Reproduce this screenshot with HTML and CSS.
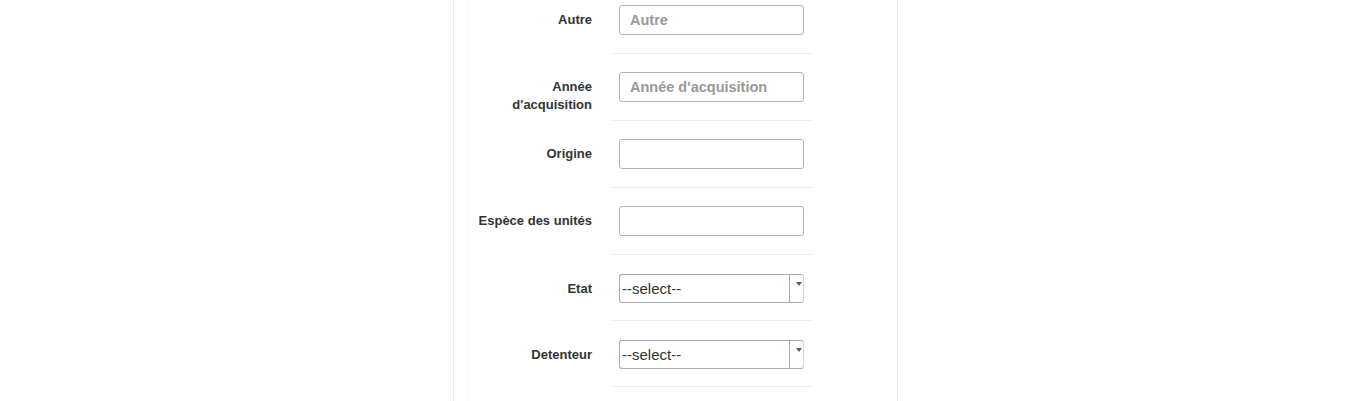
FILE: index.html
```html
<!DOCTYPE html>
<html lang="fr">
<head>
<meta charset="utf-8">
<title>Formulaire</title>
<link rel="stylesheet" href="styles.css">
</head>
<body>
<div class="panel">
  <div class="inner">
    <div class="row">
      <label class="label">Autre</label>
      <div class="field"><input class="input" type="text" placeholder="Autre"></div>
    </div>
    <div class="row">
      <label class="label">Année<br>d'acquisition</label>
      <div class="field"><input class="input" type="text" placeholder="Année d'acquisition"></div>
    </div>
    <div class="row">
      <label class="label">Origine</label>
      <div class="field"><input class="input" type="text"></div>
    </div>
    <div class="row">
      <label class="label">Espèce des unités</label>
      <div class="field"><input class="input" type="text"></div>
    </div>
    <div class="row row-select">
      <label class="label">Etat</label>
      <div class="field">
        <div class="select"><span class="sel-text">--select--</span><span class="sel-arrow"><span class="tri"></span></span></div>
      </div>
    </div>
    <div class="row row-select">
      <label class="label">Detenteur</label>
      <div class="field">
        <div class="select"><span class="sel-text">--select--</span><span class="sel-arrow"><span class="tri"></span></span></div>
      </div>
    </div>
  </div>
</div>
</body>
</html>
```
FILE: styles.css
```css
html, body {
  margin: 0;
  padding: 0;
  background: #fff;
  font-family: "Liberation Sans", Arial, sans-serif;
  color: #333;
}
.panel {
  width: 443px;
  margin: -13px auto 0;
  border-left: 1px solid #ececec;
  border-right: 1px solid #ececec;
  height: 430px;
  position: relative;
  left: 1px;
}
.inner {
  margin-left: 14px;
  height: 100%;
  border-left: 1px solid #fafafa;
}
.row {
  display: flex;
}
.label {
  width: 123px;
  padding-right: 18px;
  padding-top: 24px;
  text-align: right;
  font-size: 13px;
  font-weight: bold;
  line-height: 18px;
  color: #333;
}
.field {
  width: 203px;
  padding: 18px 0 18px;
  border-bottom: 1px solid #eee;
}
.row-select .label {
  padding-top: 25px;
}
.row-select .field {
  padding: 19px 0 17px;
}
.input {
  display: block;
  margin-left: 9px;
  width: 185px;
  height: 30px;
  box-sizing: border-box;
  border: 1px solid #b3b3b3;
  border-radius: 3px;
  padding: 0 10px;
  font-family: "Liberation Sans", Arial, sans-serif;
  font-size: 14.5px;
  color: #555;
  outline: none;
}
.input::placeholder {
  color: #999;
  font-weight: bold;
}
.select {
  margin-left: 9px;
  width: 185px;
  height: 29px;
  box-sizing: border-box;
  border: 1px solid #aaa;
  border-right-color: #d4d4d4;
  border-radius: 3px;
  display: flex;
  align-items: stretch;
}
.sel-text {
  flex: 1;
  padding-left: 2px;
  font-size: 15px;
  line-height: 27px;
  color: #333;
}
.sel-arrow {
  width: 14px;
  border-left: 1px solid #aaa;
  display: flex;
  justify-content: center;
  padding-top: 7px;
  box-sizing: border-box;
  padding-left: 5px;
}
.tri {
  width: 0;
  height: 0;
  border-left: 3px solid transparent;
  border-right: 3px solid transparent;
  border-top: 4px solid #3f6079;
}
```
